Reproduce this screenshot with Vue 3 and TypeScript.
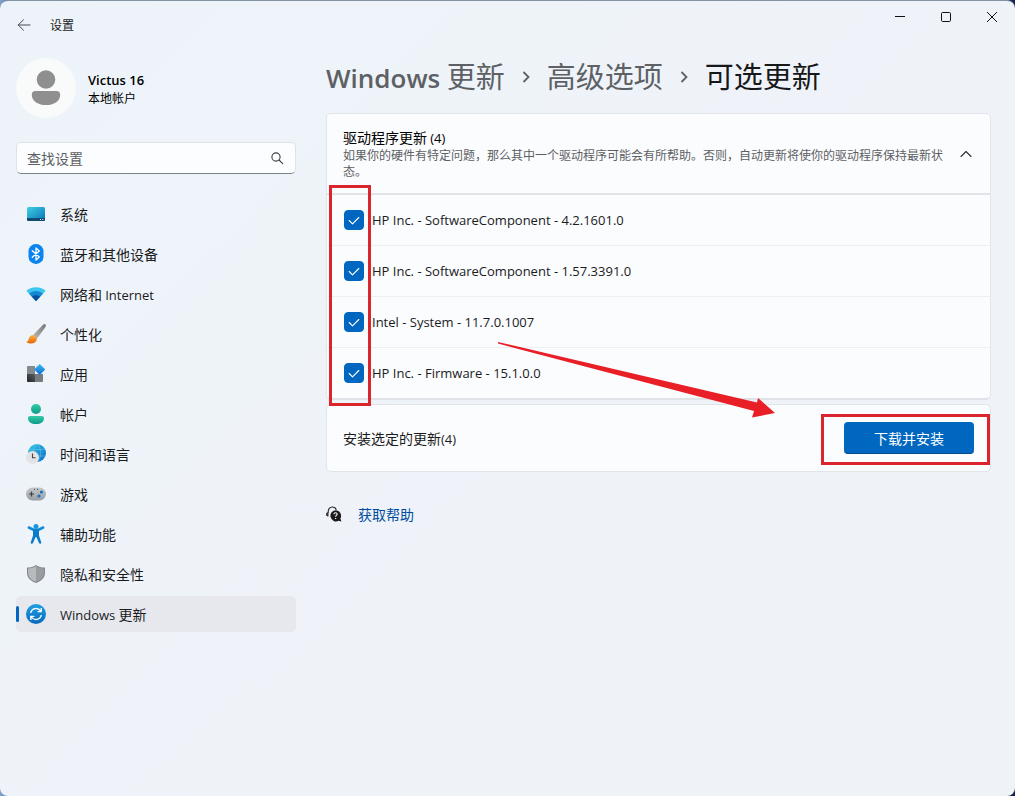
<script setup lang="ts">
import { computed, ref } from 'vue'

interface NavItem {
  id: string
  label: string
  latin?: string
  latinFirst?: boolean
}

interface DriverUpdate {
  name: string
  selected: boolean
}

const navItems: NavItem[] = [
  { id: 'system', label: '系统' },
  { id: 'bluetooth', label: '蓝牙和其他设备' },
  { id: 'network', label: '网络和', latin: 'Internet' },
  { id: 'personal', label: '个性化' },
  { id: 'apps', label: '应用' },
  { id: 'accounts', label: '帐户' },
  { id: 'time', label: '时间和语言' },
  { id: 'gaming', label: '游戏' },
  { id: 'access', label: '辅助功能' },
  { id: 'privacy', label: '隐私和安全性' },
  { id: 'update', label: '更新', latin: 'Windows', latinFirst: true },
]

const active = ref('update')
const query = ref('')
const expanded = ref(true)
const updates = ref<DriverUpdate[]>([
  { name: 'HP Inc. - SoftwareComponent - 4.2.1601.0', selected: true },
  { name: 'HP Inc. - SoftwareComponent - 1.57.3391.0', selected: true },
  { name: 'Intel - System - 11.7.0.1007', selected: true },
  { name: 'HP Inc. - Firmware - 15.1.0.0', selected: true },
])
const selectedCount = computed(() => updates.value.filter((u) => u.selected).length)
</script>

<template>
  <div class="window" lang="zh-CN">
    <header class="titlebar">
      <button class="back" type="button" aria-label="返回">
        <svg width="14" height="14" viewBox="0 0 14 14" fill="none" stroke="#444a50" stroke-linecap="round" stroke-linejoin="round">
          <path d="M13 7H1.2M6.5 1.8L1.2 7l5.3 5.2" />
        </svg>
      </button>
      <span class="app-name">设置</span>
      <div class="captions">
        <button type="button" aria-label="最小化">
          <svg width="12" height="12" viewBox="0 0 12 12"><path d="M1 5.5h10" stroke="#111" /></svg>
        </button>
        <button type="button" aria-label="最大化">
          <svg width="12" height="12" viewBox="0 0 12 12"><rect x="1.5" y="1.5" width="9" height="9" rx="1.2" fill="none" stroke="#111" /></svg>
        </button>
        <button type="button" aria-label="关闭">
          <svg width="12" height="12" viewBox="0 0 12 12"><path d="M1 1l10 10M11 1L1 11" stroke="#111" /></svg>
        </button>
      </div>
    </header>

    <div class="body">
      <aside class="sidebar">
        <div class="profile">
          <svg class="avatar" width="60" height="60" viewBox="0 0 60 60">
            <circle cx="30" cy="30" r="30" fill="#f9fafa" />
            <circle cx="30" cy="21.5" r="9.3" fill="#8f8f8f" />
            <path d="M19.5 33h21a3.7 3.7 0 0 1 3.7 3.7C44.2 43.5 37.5 47 30 47s-14.200-3.500-14.200-10.300A3.700 3.700 0 0 1 19.500 33z" fill="#8f8f8f" />
          </svg>
          <div>
            <div class="user">Victus 16</div>
            <div class="account">本地帐户</div>
          </div>
        </div>

        <label class="search">
          <input v-model="query" type="text" placeholder="查找设置" aria-label="查找设置" />
          <svg width="14" height="14" viewBox="0 0 14 14" fill="none" stroke="#3c4146" stroke-width="1.1" stroke-linecap="round">
            <circle cx="6" cy="6" r="4.100" /><path d="M9 9l3.700 3.700" />
          </svg>
        </label>

        <nav class="nav">
          <button
            v-for="item in navItems"
            :key="item.id"
            type="button"
            class="nav-item"
            :class="{ active: item.id === active }"
            @click="active = item.id"
          >
            <svg v-if="item.id === 'system'" width="20" height="20" viewBox="0 0 20 20">
              <defs><linearGradient id="g-sys" x1="0" y1="0" x2="1" y2="1"><stop stop-color="#3fd0e4" /><stop offset="1" stop-color="#0871b4" /></linearGradient></defs>
              <rect x="1" y="3" width="18" height="14" rx="1.500" fill="url(#g-sys)" />
              <path d="M1 14h18v1.500a1.500 1.500 0 0 1-1.500 1.500h-15A1.500 1.500 0 0 1 1 15.500z" fill="#124b72" />
              <path d="M14 15.500h1M16.300 15.500h1" stroke="#d6f3ff" />
            </svg>
            <svg v-else-if="item.id === 'bluetooth'" width="20" height="20" viewBox="0 0 20 20">
              <rect x="2.500" y="0" width="15" height="20" rx="7.300" fill="#0a84f0" />
              <path d="M6.300 6.800l7 6.300L10 16V4l3.300 2.900-7 6.300" fill="none" stroke="#fff" stroke-width="1.300" stroke-linejoin="round" stroke-linecap="round" />
            </svg>
            <svg v-else-if="item.id === 'network'" width="20" height="20" viewBox="0 0 20 20">
              <defs><clipPath id="c-wifi"><path d="M-1 5.500 10 17.300 21 5.500V0H-1z" /></clipPath></defs>
              <g clip-path="url(#c-wifi)">
                <path d="M0 7.300C5 1.800 15 1.800 20 7.300L10 17.500z" fill="#3ac6ee" />
                <path d="M2.800 10.200c4-4.200 10.400-4.200 14.400 0L10 17.500z" fill="#1587d2" />
                <path d="M5.700 13c2.300-2.500 6.300-2.500 8.600 0L10 17.300z" fill="#0b4e9b" />
              </g>
            </svg>
            <svg v-else-if="item.id === 'personal'" width="20" height="20" viewBox="0 0 20 20">
              <defs>
                <linearGradient id="g-brush" x1="1" y1="0" x2="0" y2="1"><stop stop-color="#777" /><stop offset="1" stop-color="#b9b9b9" /></linearGradient>
                <linearGradient id="g-tip" x1="0" y1="0" x2="0" y2="1"><stop stop-color="#ffb13b" /><stop offset="1" stop-color="#e8640c" /></linearGradient>
              </defs>
              <path d="M19.500.500c.7.800.3 2-.5 3.200L11 14.500 7.200 11 17 .8c.9-.8 1.900-1 2.500-.3z" fill="url(#g-brush)" />
              <path d="M7.300 11l3.500 3.300c.4 2.500-1.800 5.200-5.300 5.200-2.500 0-4.500-.8-5.200-1.800 1.500 0 2-1 2.400-2.600.6-2.500 2.300-4.300 4.600-4.100z" fill="url(#g-tip)" />
            </svg>
            <svg v-else-if="item.id === 'apps'" width="20" height="20" viewBox="0 0 20 20">
              <defs>
                <linearGradient id="g-app" x1="0" y1="0" x2="1" y2="1"><stop stop-color="#3db7f5" /><stop offset="1" stop-color="#0a70d0" /></linearGradient>
                <linearGradient id="g-app2" x1="0" y1="1" x2="1" y2="0"><stop stop-color="#222528" /><stop offset="1" stop-color="#5b6065" /></linearGradient>
              </defs>
              <path d="M1 3a1 1 0 0 1 1-1h7v8H1z" fill="#858a8e" />
              <path d="M1 10h8v8H2a1 1 0 0 1-1-1z" fill="url(#g-app2)" />
              <path d="M9 10h8v7a1 1 0 0 1-1 1H9z" fill="#777c81" />
              <rect x="9.700" y="1.500" width="8" height="8" rx=".8" transform="rotate(45 13.700 5.500)" fill="url(#g-app)" />
            </svg>
            <svg v-else-if="item.id === 'accounts'" width="20" height="20" viewBox="0 0 20 20">
              <defs><linearGradient id="g-acc" x1="0" y1="0" x2="0" y2="1"><stop stop-color="#34cba4" /><stop offset="1" stop-color="#0d9c8d" /></linearGradient></defs>
              <circle cx="10" cy="5" r="5" fill="url(#g-acc)" />
              <path d="M4.200 12h11.600a2.200 2.200 0 0 1 2.200 2.200c0 3.600-3.300 5.800-8 5.800s-8-2.200-8-5.800A2.200 2.200 0 0 1 4.200 12z" fill="url(#g-acc)" />
            </svg>
            <svg v-else-if="item.id === 'time'" width="20" height="20" viewBox="0 0 20 20">
              <defs><linearGradient id="g-globe" x1="0" y1="0" x2="1" y2="1"><stop stop-color="#36c8e6" /><stop offset="1" stop-color="#0b6bc5" /></linearGradient></defs>
              <circle cx="11" cy="9" r="9" fill="url(#g-globe)" />
              <path d="M3.500 5.500h15M3 12h16.500M11 0c-5 5-5 13 0 18M11 0c5 5 5 13 0 18" fill="none" stroke="#8fe0f7" stroke-width=".7" opacity=".5" />
              <circle cx="6.500" cy="13.500" r="6.500" fill="#e2e3e5" />
              <path d="M6.500 9.500v4.300h3" fill="none" stroke="#444" stroke-width="1.100" />
            </svg>
            <svg v-else-if="item.id === 'gaming'" width="20" height="20" viewBox="0 0 20 20">
              <defs><linearGradient id="g-pad" x1="0" y1="0" x2="0" y2="1"><stop stop-color="#c5c8cb" /><stop offset="1" stop-color="#9a9ea3" /></linearGradient></defs>
              <rect x="0" y="3.500" width="20" height="13" rx="6.500" fill="url(#g-pad)" />
              <path d="M5.500 7.500v5M3 10h5" stroke="#3b3f44" stroke-width="1.200" />
              <circle cx="15.500" cy="8" r="1.600" fill="#1471c4" /><circle cx="13" cy="12" r="1.600" fill="#1471c4" />
              <path d="M8 5.300h1M11 5.300h1" stroke="#444" />
            </svg>
            <svg v-else-if="item.id === 'access'" width="20" height="20" viewBox="0 0 20 20">
              <circle cx="10" cy="2.600" r="2.500" fill="#1797dc" />
              <path d="M2.800 3.500L8 6h4l5.200-2.500M10 6v6" fill="none" stroke="#128bd4" stroke-width="2.500" stroke-linecap="round" stroke-linejoin="round" />
              <path d="M7 5.500h6v6l2.200 6.800c.4 1.400-1.600 2.200-2.200.8L10.400 13h-.8L7 19.100c-.6 1.400-2.600.6-2.200-.8L7 11.500z" fill="#087bc9" />
            </svg>
            <svg v-else-if="item.id === 'privacy'" width="20" height="20" viewBox="0 0 20 20">
              <path d="M10 1c2.800 1.800 5.500 2.500 9 2.600V9c0 4.800-3.500 8-9 10C4.500 17 1 13.800 1 9V3.600C4.500 3.500 7.200 2.800 10 1z" fill="#85898d" />
              <path d="M10 2.300c2.600 1.500 5 2.100 7.900 2.300V9c0 4-2.900 6.900-7.900 8.800z" fill="#999da0" />
              <path d="M10 2.300C7.400 3.800 5 4.400 2.100 4.600V9c0 4 2.900 6.900 7.900 8.800z" fill="#b7babd" />
            </svg>
            <svg v-else width="20" height="20" viewBox="0 0 20 20">
              <defs><linearGradient id="g-upd" x1="0" y1="0" x2="0" y2="1"><stop stop-color="#1fa0e3" /><stop offset="1" stop-color="#0968bd" /></linearGradient></defs>
              <circle cx="10" cy="10" r="10" fill="url(#g-upd)" />
              <path d="M4.700 9a5.400 5.400 0 0 1 9.900-2M15.300 11a5.400 5.400 0 0 1-9.900 2M15.200 4v3.600h-3.600M4.800 16v-3.600h3.600" fill="none" stroke="#fff" stroke-width="1.400" />
            </svg>
            <span class="nav-label">
              <template v-if="item.latinFirst"><span class="latin">{{ item.latin }}</span>&nbsp;{{ item.label }}</template>
              <template v-else>{{ item.label }}<template v-if="item.latin">&nbsp;<span class="latin">{{ item.latin }}</span></template></template>
            </span>
          </button>
        </nav>
      </aside>

      <main class="content">
        <h1 class="crumbs">
          <a href="#update"><span class="crumb-latin">Windows</span> 更新</a>
          <svg width="10" height="14" viewBox="0 0 10 14" fill="none" stroke="#5d6165" stroke-width="1.800"><path d="M2.500 2l5 5-5 5" /></svg>
          <a href="#advanced">高级选项</a>
          <svg width="10" height="14" viewBox="0 0 10 14" fill="none" stroke="#5d6165" stroke-width="1.800"><path d="M2.500 2l5 5-5 5" /></svg>
          <span class="current">可选更新</span>
        </h1>

        <div class="cards">
          <section class="expander">
            <button class="expander-head" type="button" :aria-expanded="expanded" @click="expanded = !expanded">
              <span class="expander-text">
                <span class="expander-title">驱动程序更新 <span class="latin">({{ updates.length }})</span></span>
                <span class="expander-desc">如果你的硬件有特定问题，那么其中一个驱动程序可能会有所帮助。否则，自动更新将使你的驱动程序保持最新状态。</span>
              </span>
              <svg width="12" height="12" viewBox="0 0 12 12" fill="none" stroke="#2c3034" stroke-width="1.100" stroke-linecap="round" stroke-linejoin="round"><path d="M1 8.500l5-5 5 5" /></svg>
            </button>
            <div v-if="expanded" class="list-wrap">
              <ul class="list">
                <li v-for="(u, i) in updates" :key="u.name">
                  <label class="row" :for="`update-${i}`">
                    <span class="check">
                      <input :id="`update-${i}`" v-model="u.selected" type="checkbox" />
                      <svg v-if="u.selected" width="12" height="12" viewBox="0 0 12 12" fill="none" stroke="#fff" stroke-width="1.100" stroke-linecap="round" stroke-linejoin="round"><path d="M1.200 6.500l3.300 3.300 6.300-6.300" /></svg>
                    </span>
                    <span>{{ u.name }}</span>
                  </label>
                </li>
              </ul>
              <div class="mark mark-list"></div>
            </div>
          </section>

          <section class="install">
            <span>安装选定的更新<span class="latin">({{ selectedCount }})</span></span>
            <div class="install-action">
              <button type="button" class="primary">下载并安装</button>
              <div class="mark mark-button"></div>
            </div>
          </section>

          <svg class="arrow" width="278" height="76" viewBox="0 0 278 76">
            <path d="M0 0L259 60.500 260 56 277 71 254 75.500 256 69 0 1.500z" fill="#e81f27" />
          </svg>
        </div>

        <div class="help">
          <svg width="16" height="16" viewBox="0 0 16 16">
            <path d="M1 9.500V7.200M2.200 6.300C2 2.800 4 1 6.200 1c2 0 3.400 1 3.900 2.500" fill="none" stroke="#222" stroke-width="1.100" stroke-linecap="round" />
            <path d="M.3 8.200c0-1.500.8-2.200 2.200-2.200v4.500C1.100 10.500.3 9.700.3 8.200z" fill="#333" />
            <path d="M9.500 4.200a5.600 5.600 0 0 1 4.900 8.300l1 2.900-2.900-.6A5.600 5.600 0 1 1 9.500 4.200z" fill="#1b1b1b" />
            <path d="M7.900 8.300c0-2.200 3.300-2.100 3.200 0 0 1.100-1.500 1.200-1.500 2.400M9.600 11.900v1" fill="none" stroke="#fff" stroke-width="1.100" />
          </svg>
          <a href="#help">获取帮助</a>
        </div>
      </main>
    </div>
  </div>
</template>

<style>
body {
  background: linear-gradient(90deg, #7fa6cc, #24439a 2%, #1d2f63 98%, #16224d);
}
</style>

<style scoped>
.window {
  box-sizing: border-box;
  min-height: 100vh;
  border-top: 1px solid #8492a6;
  border-radius: 8px;
  background: linear-gradient(135deg, #edf4f9, #eff3f9 50%, #eff3f7);
  color: #1a1b1d;
  font: 14px/20px "Noto Sans CJK SC", sans-serif;
}

button {
  border: 0;
  padding: 0;
  background: none;
  color: inherit;
  font: inherit;
}

a {
  color: inherit;
  text-decoration: none;
}

svg {
  display: block;
  flex: none;
}

.latin {
  font-family: "Open Sans", "Noto Sans", sans-serif;
  font-size: 13px;
}

.titlebar {
  display: flex;
  align-items: center;
  height: 48px;
  padding-left: 17px;
}

.app-name {
  margin-left: 19px;
  font-size: 12px;
}

.captions {
  display: flex;
  align-self: flex-start;
  margin-left: auto;
}

.captions button {
  display: grid;
  place-items: center;
  width: 46px;
  height: 32px;
}

.body {
  display: flex;
  gap: 30px;
  padding: 0 24px 24px 16px;
}

.sidebar {
  flex: none;
  width: 280px;
  padding-top: 9px;
}

.profile {
  display: flex;
  align-items: center;
  gap: 12px;
  padding-bottom: 24px;
  color: #000;
}

.user {
  font: 600 13px/20px "Open Sans", "Noto Sans", sans-serif;
}

.account {
  font-size: 12px;
  line-height: 16px;
}

.search {
  box-sizing: border-box;
  display: flex;
  align-items: center;
  height: 32px;
  padding: 0 11px 0 10px;
  border: 1px solid #dde2e7;
  border-bottom-color: #7e8388;
  border-radius: 5px;
  background: #fbfdfe;
}

.search input {
  flex: 1;
  min-width: 0;
  padding: 0;
  border: 0;
  outline: 0;
  background: none;
  color: inherit;
  font: inherit;
}

.search input::placeholder {
  color: #5c6064;
  opacity: 1;
}

.nav {
  display: flex;
  flex-direction: column;
  gap: 4px;
  margin-top: 22px;
}

.nav-item {
  position: relative;
  display: flex;
  align-items: center;
  gap: 14px;
  height: 36px;
  padding: 0 10px;
  border-radius: 5px;
  text-align: left;
}

.nav-item.active {
  background: #e7e8ed;
}

.nav-item.active::before {
  content: "";
  position: absolute;
  top: 10px;
  left: 0;
  width: 3px;
  height: 16px;
  border-radius: 2px;
  background: #0067c0;
}

.content {
  flex: 1;
  min-width: 0;
}

.crumbs {
  display: flex;
  flex-wrap: wrap;
  align-items: center;
  gap: 16px;
  margin: 7px 0 16px;
  color: #5d6165;
  font-size: 29px;
  font-weight: 400;
  line-height: 40px;
}

.crumbs a,
.current {
  height: 41px;
  line-height: 38px;
}

.crumb-latin {
  font: 600 26px/38px "Open Sans", "Noto Sans", sans-serif;
}

.current {
  color: #17181a;
}

.cards {
  position: relative;
  display: flex;
  flex-direction: column;
  gap: 4px;
}

.expander {
  border: 1px solid #e0e5ea;
  border-bottom: 2px solid #dfe3e8;
  border-radius: 5px;
  background: #fbfcfe;
}

.expander-head {
  display: flex;
  align-items: center;
  gap: 12px;
  width: 100%;
  min-height: 79px;
  padding: 0 18px 0 16px;
  text-align: left;
}

.expander-text {
  display: flex;
  flex: 1;
  flex-direction: column;
}

.expander-title {
  color: #000;
  line-height: 18px;
}

.expander-desc {
  color: #5d6063;
  font-size: 12px;
  line-height: 16px;
}

.list-wrap {
  position: relative;
  border-top: 2px solid #e0e4e9;
}

.list {
  margin: 0;
  padding: 0;
  list-style: none;
}

.list li + li {
  border-top: 1px solid #eceff3;
}

.row {
  display: flex;
  align-items: center;
  gap: 8px;
  height: 50px;
  padding: 0 17px;
  font: 13px/20px "Open Sans", "Noto Sans", sans-serif;
}

.check {
  display: grid;
  place-items: center;
}

.check input,
.check svg {
  grid-area: 1 / 1;
}

.check svg {
  pointer-events: none;
}

.check input {
  appearance: none;
  box-sizing: border-box;
  width: 20px;
  height: 20px;
  margin: 0;
  border: 1px solid #868a8e;
  border-radius: 4px;
  background: #f6f8fa;
}

.check input:checked {
  border-color: #0067c0;
  background: #0067c0;
}

.install {
  display: flex;
  align-items: center;
  justify-content: space-between;
  min-height: 66px;
  padding: 0 16px;
  border: 1px solid #e0e5ea;
  border-radius: 5px;
  background: #fbfcfe;
}

.install-action {
  position: relative;
}

.primary {
  display: block;
  width: 130px;
  height: 32px;
  border-bottom: 1px solid #004a8c;
  border-radius: 4px;
  background: #0067c0;
  color: #fff;
}

.mark {
  position: absolute;
  border: 3px solid #d9252b;
  pointer-events: none;
}

.mark-list {
  top: -10px;
  bottom: -8px;
  left: 2px;
  width: 36px;
}

.mark-button {
  inset: -8px -16px -11px -23px;
}

.arrow {
  position: absolute;
  top: 229px;
  left: 172px;
  pointer-events: none;
}

.help {
  display: flex;
  align-items: center;
  gap: 16px;
  margin-top: 32px;
  color: #004c9c;
}
</style>
